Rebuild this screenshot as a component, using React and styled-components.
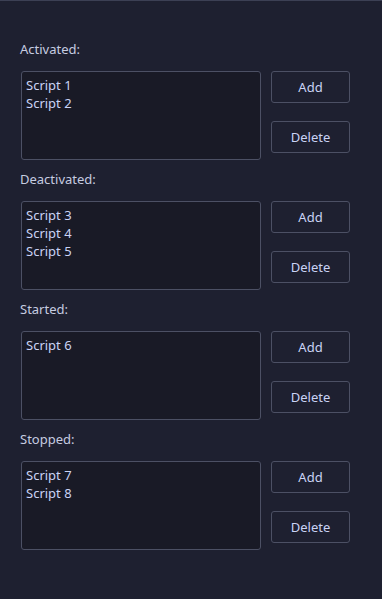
import React from "react";
import styled, { createGlobalStyle } from "styled-components";

const GlobalStyle = createGlobalStyle`
  html, body {
    margin: 0;
    padding: 0;
    background: #1e2030;
  }
  body {
    font-family: "Noto Sans", "Open Sans", sans-serif;
    font-size: 13px;
    color: #cad3f5;
  }
`;

const groups = [
  { label: "Activated:", scripts: ["Script 1", "Script 2"] },
  { label: "Deactivated:", scripts: ["Script 3", "Script 4", "Script 5"] },
  { label: "Started:", scripts: ["Script 6"] },
  { label: "Stopped:", scripts: ["Script 7", "Script 8"] },
];

function App() {
  return (
    <>
      <GlobalStyle />
      <Page>
        {groups.map((g) => (
          <Section key={g.label}>
            <Label>{g.label}</Label>
            <Row>
              <ScriptList>
                {g.scripts.map((s) => (
                  <Item key={s}>{s}</Item>
                ))}
              </ScriptList>
              <Buttons>
                <Button>Add</Button>
                <Button>Delete</Button>
              </Buttons>
            </Row>
          </Section>
        ))}
      </Page>
    </>
  );
}

const Page = styled.div`
  box-sizing: border-box;
  height: 599px;
  border-top: 1px solid #3c4054;
  padding: 39px 20px 0 20px;
  display: flex;
  flex-direction: column;
  gap: 10px;
`;

const Section = styled.div`
  display: flex;
  flex-direction: column;
  gap: 13px;
`;

const Label = styled.div`
  height: 17px;
  padding-top: 1px;
  line-height: 17px;
  color: #c6cce0;
`;

const Row = styled.div`
  display: flex;
  align-items: flex-start;
  gap: 10px;
  padding-left: 1px;
`;

const ScriptList = styled.div`
  box-sizing: border-box;
  width: 240px;
  height: 89px;
  padding: 4px 4px;
  background: #191a26;
  border: 1px solid #4c5064;
  border-radius: 3px;
`;

const Item = styled.div`
  height: 18px;
  line-height: 18px;
`;

const Buttons = styled.div`
  display: flex;
  flex-direction: column;
  gap: 18px;
`;

const Button = styled.button`
  box-sizing: border-box;
  width: 79px;
  height: 32px;
  background: #1e2030;
  border: 1px solid #4c5064;
  border-radius: 3px;
  color: #cad3f5;
  font-family: "Noto Sans", "Open Sans", sans-serif;
  font-size: 13px;
  padding: 0;
  cursor: pointer;
`;

export default App;
